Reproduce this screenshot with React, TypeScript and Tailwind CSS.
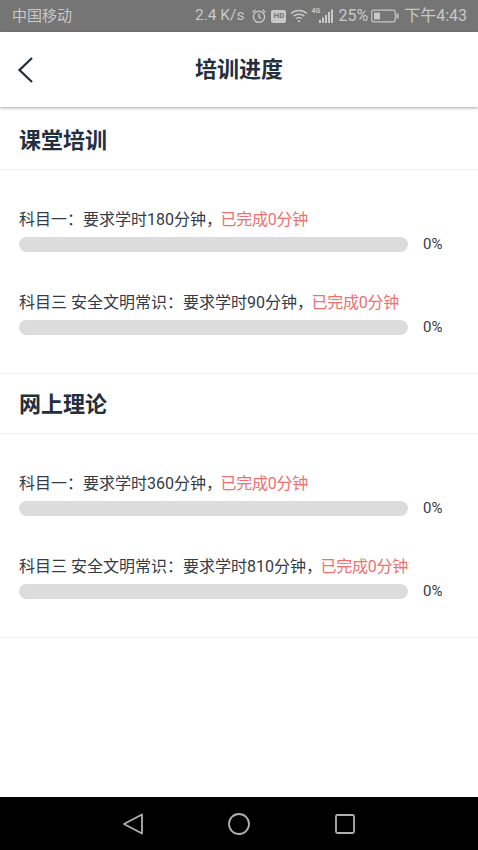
const FONT = "font-['Roboto','Noto_Sans_CJK_SC',sans-serif]";

interface Subject {
  name: string;
  required: string;
  gap: string;
}

const CLASSROOM: Subject[] = [
  { name: "科目一：", required: "要求学时180分钟，", gap: "mt-[38px]" },
  { name: "科目三 安全文明常识：", required: "要求学时90分钟，", gap: "mt-[39px]" },
];

const ONLINE: Subject[] = [
  { name: "科目一：", required: "要求学时360分钟，", gap: "mt-[38px]" },
  { name: "科目三 安全文明常识：", required: "要求学时810分钟，", gap: "mt-[39px]" },
];

function StatusBar() {
  return (
    <div className="flex h-[32px] items-center justify-between bg-[#757575] pl-[12px] pr-[11px] text-[16px] text-[#c8c8c8]">
      <span className="text-[15px]">中国移动</span>
      <div className="flex items-center">
        <span className="mr-[7px] text-[15.5px]">2.4 K/s</span>
        {/* alarm */}
        <svg width="16" height="16" viewBox="0 0 16 16" fill="none" stroke="#c8c8c8" strokeWidth="1.4">
          <circle cx="8" cy="8.8" r="5.6" />
          <path d="M8 5.6v3.4l2 1.6M1.5 4.2l3-2.4M14.5 4.2l-3-2.4" />
        </svg>
        <span className="ml-[4px] flex h-[13px] w-[15px] items-center justify-center rounded-[2px] bg-[#c8c8c8] text-[8px] font-bold leading-none text-[#757575]">
          HD
        </span>
        {/* wifi */}
        <svg className="ml-[4px]" width="18" height="16" viewBox="0 0 18 16" fill="none" stroke="#c8c8c8" strokeWidth="1.4">
          <path d="M1 5.5c4.5-4 11.5-4 16 0M3.5 8.2c3-2.6 8-2.6 11 0M6 10.8c1.7-1.300 4.300-1.300 6 0" />
          <circle cx="9" cy="13.2" r="1.1" fill="#c8c8c8" stroke="none" />
        </svg>
        <div className="relative ml-[3px] h-[16px] w-[24px]">
          <span className="absolute left-0 top-[-1px] text-[7px] font-bold leading-[8px]">4G</span>
          {/* signal */}
          <svg className="absolute left-0 top-0" width="24" height="16" viewBox="0 0 24 16" fill="#c8c8c8">
            <rect x="8" y="12" width="2" height="3" />
            <rect x="11" y="9.5" width="2" height="5.5" />
            <rect x="14" y="7" width="2" height="8" />
            <rect x="17" y="4" width="2" height="11" />
            <rect x="20" y="1.5" width="2" height="13.5" />
          </svg>
        </div>
        <span className="ml-[3px]">25%</span>
        {/* battery */}
        <svg className="ml-[3px]" width="28" height="14" viewBox="0 0 28 14" fill="none">
          <rect x="0.7" y="1.2" width="23.5" height="11.6" rx="2" stroke="#c8c8c8" strokeWidth="1.2" />
          <rect x="3" y="3.5" width="6" height="7" fill="#c8c8c8" />
          <rect x="25.5" y="4.5" width="2" height="5" fill="#c8c8c8" />
        </svg>
        <span className="ml-[5px]">下午4:43</span>
      </div>
    </div>
  );
}

function Header() {
  return (
    <div className="relative z-10 flex h-[75px] items-center justify-center bg-white shadow-[0_1px_3px_rgba(0,0,0,0.35)]">
      <svg className="absolute left-[17px] top-[24px]" width="18" height="28" viewBox="0 0 18 28" fill="none" stroke="#232f3e" strokeWidth="2.3">
        <path d="M15 2 2.5 14 15 26" />
      </svg>
      <h1 className="text-[22px] font-bold text-[#232f3e]">培训进度</h1>
    </div>
  );
}

function ProgressRow({ subject }: { subject: Subject }) {
  return (
    <div className={subject.gap}>
      <p className="h-[24px] whitespace-nowrap text-[16px] leading-[24px] text-[#333b46]">
        {subject.name}
        {subject.required}
        <span className="ml-[-1.5px] tracking-[-0.25px] text-[#f07070]">已完成0分钟</span>
      </p>
      <div className="mt-[5px] flex items-center">
        <div className="h-[15px] w-[389px] rounded-full bg-[#dcdcdc]" />
        <span className="ml-[15px] text-[15px] leading-[15px] text-[#333b46]">0%</span>
      </div>
    </div>
  );
}

function Section({ title, rows, className }: { title: string; rows: Subject[]; className?: string }) {
  return (
    <section className={`border-b border-[#efefef] pb-[38px] ${className ?? ""}`}>
      <div className="flex h-[60px] items-center border-b border-[#efefef] px-[19px] pt-[2px]">
        <h2 className="text-[22px] font-bold text-[#232f3e]">{title}</h2>
      </div>
      <div className="pl-[19px]">
        {rows.map((row) => (
          <ProgressRow key={row.name} subject={row} />
        ))}
      </div>
    </section>
  );
}

export default function App() {
  return (
    <div className={`${FONT} flex h-[850px] w-[478px] flex-col overflow-hidden bg-white`}>
      <StatusBar />
      <Header />
      <div className="flex-1">
        <Section title="课堂培训" rows={CLASSROOM} className="mt-[3px]" />
        <Section title="网上理论" rows={ONLINE} />
      </div>
      <div className="flex h-[53px] items-center justify-between bg-black pl-[122px] pr-[122px]">
        <svg width="22" height="24" viewBox="0 0 22 24" fill="none" stroke="#b0b0b0" strokeWidth="1.8" strokeLinejoin="round">
          <path d="M20 2.5v19L2 12z" />
        </svg>
        <svg width="24" height="24" viewBox="0 0 24 24" fill="none" stroke="#b0b0b0" strokeWidth="1.8">
          <circle cx="12" cy="12" r="10" />
        </svg>
        <svg width="22" height="22" viewBox="0 0 22 22" fill="none" stroke="#b0b0b0" strokeWidth="1.8">
          <rect x="2" y="2" width="18" height="18" rx="1.5" />
        </svg>
      </div>
    </div>
  );
}
